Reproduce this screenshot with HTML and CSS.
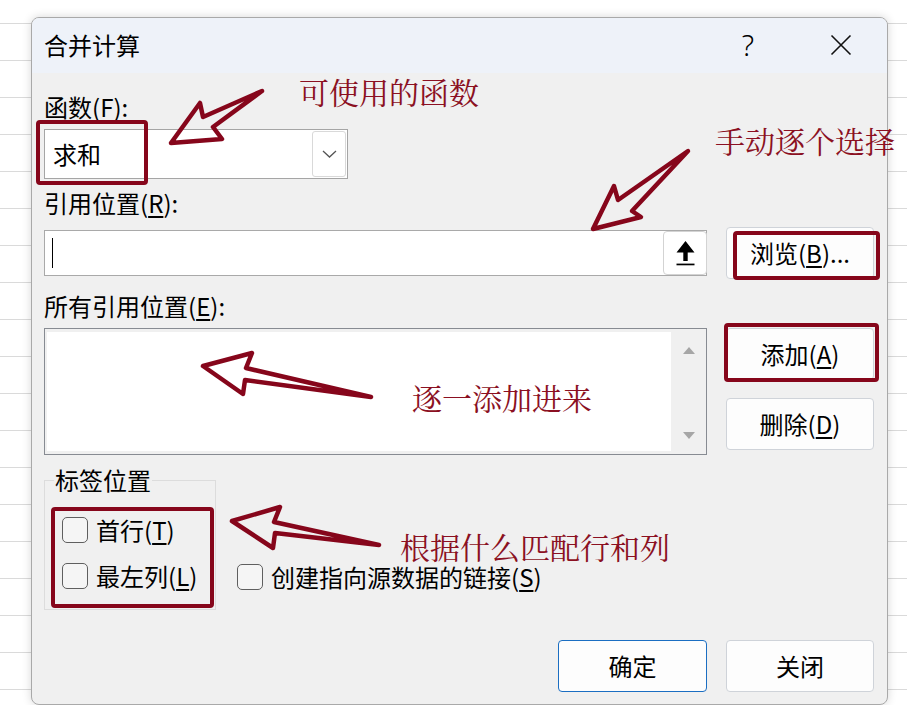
FILE: index.html
```html
<!DOCTYPE html>
<html lang="zh-CN">
<head>
<meta charset="utf-8">
<title>合并计算</title>
<link rel="stylesheet" href="styles.css">
</head>
<body>
<div class="stage">
  <div class="dialog">
    <div class="titlebar">
      <div class="title">合并计算</div>
      <div class="tb-btn help">?</div>
      <div class="tb-btn close">
        <svg width="22" height="22" viewBox="0 0 22 22"><path d="M1.5 1.5 L20.5 20.5 M20.5 1.5 L1.5 20.5" stroke="#111" stroke-width="1.6" fill="none"/></svg>
      </div>
    </div>
    <div class="content">
      <div class="label">函数(<u>F</u>):</div>
      <div class="combo">
        <span class="combo-value">求和</span>
        <span class="combo-btn">
          <svg width="15" height="8" viewBox="0 0 15 8"><path d="M1 1 L7.5 7 L14 1" stroke="#555" stroke-width="1.3" fill="none"/></svg>
        </span>
      </div>
      <div class="label label-2">引用位置(<u>R</u>):</div>
      <div class="ref-row">
        <div class="input">
          <span class="caret"></span>
          <span class="pick">
            <svg width="19" height="25" viewBox="0 0 19 25"><path d="M9.5 0 L18.5 11.5 L11.7 11.5 L11.7 20 L7.3 20 L7.3 11.5 L0.5 11.5 Z" fill="#000"/><rect x="0.5" y="22.6" width="18" height="1.7" fill="#000"/></svg>
          </span>
        </div>
        <div class="btn">浏览(<u>B</u>)...</div>
      </div>
      <div class="label label-3">所有引用位置(<u>E</u>):</div>
      <div class="list-row">
        <div class="listbox">
          <div class="list-inner"></div>
          <div class="scrollbar"><span class="arr up"></span><span class="arr down"></span></div>
        </div>
        <div class="side-btns">
          <div class="btn">添加(<u>A</u>)</div>
          <div class="btn">删除(<u>D</u>)</div>
        </div>
      </div>
      <div class="options">
        <fieldset class="group">
          <legend>标签位置</legend>
          <div class="check first"><span class="box"></span><span>首行(<u>T</u>)</span></div>
          <div class="check second"><span class="box"></span><span>最左列(<u>L</u>)</span></div>
        </fieldset>
        <div class="check link"><span class="box"></span><span>创建指向源数据的链接(<u>S</u>)</span></div>
      </div>
      <div class="footer">
        <div class="btn primary">确定</div>
        <div class="btn">关闭</div>
      </div>
    </div>
  </div>

  <svg class="marks" width="907" height="705" viewBox="0 0 907 705">
    <g fill="none" stroke="#86061b" stroke-width="4" stroke-linejoin="round" stroke-linecap="round">
      <rect x="38" y="122" width="108" height="61" rx="2"/>
      <rect x="735" y="233" width="143" height="45" rx="2"/>
      <rect x="726" y="325" width="151" height="55" rx="2"/>
      <rect x="53" y="509" width="159" height="97" rx="2"/>
    </g>
    <g fill="none" stroke="#86061b" stroke-width="4.5" stroke-linejoin="round" stroke-linecap="round">
      <polygon points="171,143 200,103 203,117 262,91 213,127 222,139"/>
      <polygon points="593,229 614,186 618,200 688,151 632,211 641,217"/>
      <polygon points="203,366 252,353 246,368 371,397 245,380 243,394"/>
      <polygon points="232,521 280,507 274,522 379,545 275,533 273,548"/>
    </g>
  </svg>
  <div class="note n1">可使用的函数</div>
  <div class="note n2">手动逐个选择</div>
  <div class="note n3">逐一添加进来</div>
  <div class="note n4">根据什么匹配行和列</div>
</div>
</body>
</html>
```
FILE: styles.css
```css
* { box-sizing: border-box; }
html, body { margin: 0; padding: 0; }
body {
  width: 907px;
  height: 705px;
  overflow: hidden;
  background: repeating-linear-gradient(to bottom, #ffffff 0, #ffffff 23px, #dadada 23px, #dadada 24px, #ffffff 24px, #ffffff 37px);
  font-family: "Noto Sans CJK SC", "Noto Sans", sans-serif;
  color: #000;
}
u { text-decoration-thickness: 1.5px; text-underline-offset: 3px; }
.stage {
  position: relative;
  width: 907px;
  height: 705px;
  padding: 17px 0 0 31px;
}
.dialog {
  width: 857px;
  height: 688px;
  background: #f0f0f0;
  border: 1px solid #a9a9a9;
  border-radius: 8px;
  box-shadow: 0 0 10px rgba(0, 0, 0, 0.16);
  overflow: hidden;
}
.titlebar {
  height: 55px;
  background: #eef2f9;
  display: flex;
  align-items: center;
  padding: 0 23px 2px 12px;
}
.title { flex: 1; font-size: 24px; line-height: 32px; }
.tb-btn {
  width: 46px;
  height: 32px;
  display: flex;
  align-items: center;
  justify-content: center;
  font-size: 24px;
  line-height: 32px;
}
.help { margin-right: 47px; font-family: "Noto Sans", sans-serif; font-weight: 300; font-size: 29px; }
.content { padding: 18px 13px 0 12px; }
.label { font-size: 24px; line-height: 32px; height: 32px; }
.label-2 { margin-top: 8px; }
.label-3 { margin-top: 11px; }
.combo {
  margin-top: 6px;
  width: 304px;
  height: 50px;
  border: 1px solid #a5a5a5;
  background: #fff;
  display: flex;
  align-items: center;
  padding: 0 1px 0 8px;
}
.combo-value { flex: 1; font-size: 24px; line-height: 32px; }
.combo-btn {
  width: 34px;
  height: 46px;
  border: 1px solid #d9d9d9;
  border-radius: 3px;
  background: #fff;
  display: flex;
  align-items: center;
  justify-content: center;
}
.ref-row {
  margin-top: 8px;
  height: 52px;
  display: flex;
  align-items: center;
  gap: 19px;
}
.input {
  width: 663px;
  height: 46px;
  border: 1px solid #a9a9a9;
  background: #fff;
  display: flex;
  align-items: center;
  padding-left: 7px;
}
.caret { width: 1px; height: 30px; background: #000; }
.pick {
  margin-left: auto;
  margin-right: -1px;
  width: 44px;
  height: 44px;
  border: 1px solid #d3d3d3;
  border-radius: 4px;
  background: #fff;
  display: flex;
  align-items: center;
  justify-content: center;
}
.btn {
  width: 148px;
  height: 52px;
  display: flex;
  align-items: center;
  justify-content: center;
  background: #fdfdfd;
  border: 1px solid #cfd3d9;
  border-radius: 4px;
  font-size: 24px;
  line-height: 32px;
}
.primary { width: 149px; border-color: #1b6ec2; }
.list-row {
  margin-top: 6px;
  display: flex;
  align-items: flex-start;
  gap: 19px;
}
.listbox {
  width: 663px;
  height: 127px;
  border: 1px solid #878b92;
  background: #f0f0f0;
  padding: 3px 0 3px 2px;
  display: flex;
}
.list-inner { flex: 1; background: #fff; }
.scrollbar {
  width: 35px;
  display: flex;
  flex-direction: column;
  justify-content: space-between;
  align-items: center;
  padding: 15px 0 12px 0;
}
.arr { width: 0; height: 0; border-left: 6px solid transparent; border-right: 6px solid transparent; }
.arr.up { border-bottom: 7px solid #a6a6a6; }
.arr.down { border-top: 7px solid #a6a6a6; }
.side-btns { display: flex; flex-direction: column; gap: 18px; }
.options {
  margin-top: 9px;
  display: flex;
  align-items: flex-end;
}
.group {
  margin: 0;
  width: 172px;
  height: 146px;
  border: 1px solid #dcdcdc;
  padding: 0 0 0 9px;
  min-width: 0;
}
.group legend { padding: 0 1px; font-size: 24px; line-height: 32px; }
.check {
  display: flex;
  align-items: center;
  gap: 8px;
  font-size: 24px;
  line-height: 28px;
  height: 32px;
  white-space: nowrap;
}
.group .check { margin-left: 8px; }
.check.first { margin-top: 18px; }
.check.second { margin-top: 14px; }
.box {
  width: 26px;
  height: 26px;
  border: 1px solid #5f5f5f;
  border-radius: 5px;
  background: #f5f5f5;
  flex: none;
}
.check.link { margin-left: 21px; margin-bottom: 17px; }
.footer {
  margin-top: 30px;
  display: flex;
  justify-content: flex-end;
  gap: 19px;
}
.marks { position: absolute; left: 0; top: 0; pointer-events: none; }
.note {
  position: absolute;
  font-family: "Noto Serif CJK SC", "Noto Sans CJK SC", serif;
  font-size: 30px;
  line-height: 26px;
  color: #8b1022;
  white-space: nowrap;
}
.n1 { left: 299px; top: 78px; }
.n2 { left: 715px; top: 127px; }
.n3 { left: 412px; top: 384px; }
.n4 { left: 400px; top: 533px; }
```
